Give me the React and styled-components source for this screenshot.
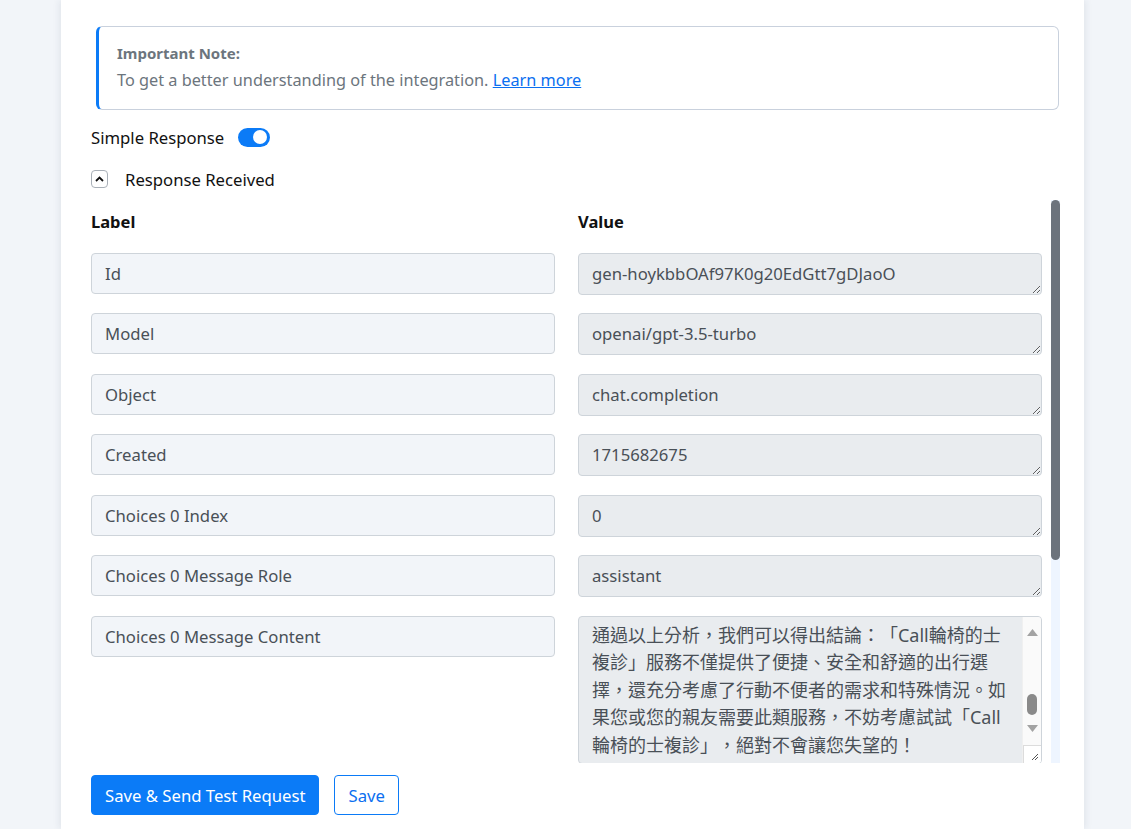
import React from 'react'
import styled, { createGlobalStyle } from 'styled-components'

const GlobalStyle = createGlobalStyle`
  html, body {
    margin: 0;
    padding: 0;
    background: #f2f5f9;
    font-family: "Noto Sans", "Noto Sans CJK TC", sans-serif;
    color: #212529;
  }
  * { box-sizing: border-box; }
`;

const Page = styled.div`
  width: 1131px;
  height: 829px;
  overflow: hidden;
  padding-left: 61px;
`;

const Card = styled.div`
  width: 1023px;
  height: 829px;
  background: #fff;
  box-shadow: -3px 0 6px rgba(30, 50, 80, 0.06), 3px 0 6px rgba(30, 50, 80, 0.06);
  padding: 26px 24px 0 30px;
  display: flex;
  flex-direction: column;
`;

const Note = styled.div`
  margin: 0 1px 0 5px;
  height: 84px;
  border: 1px solid #c9d1dd;
  border-left: 3px solid #0b7bf7;
  border-radius: 6px;
  padding: 13px 18px;
  color: #6c757d;
  font-size: 16.3px;
  line-height: 27px;
`;

const NoteTitle = styled.div`
  font-weight: 700;
  font-size: 15px;
`;

const Link = styled.a`
  color: #0b6ff0;
  text-decoration: underline;
`;

const OptionRow = styled.div`
  display: flex;
  align-items: center;
  gap: ${p => p.$gap || 14}px;
  height: 42px;
  font-size: 16.7px;
  color: #111;
  margin-top: ${p => p.$top || 0}px;
`;

const Toggle = styled.div`
  width: 32px;
  height: 19px;
  border-radius: 10px;
  background: #0b7bf7;
  display: flex;
  align-items: center;
  justify-content: flex-end;
  padding-right: 3px;
`;

const Knob = styled.div`
  width: 14px;
  height: 14px;
  border-radius: 50%;
  background: #fff;
`;

const Chevron = styled.div`
  width: 17px;
  height: 18px;
  border: 1px solid #a9b0b8;
  border-radius: 4px;
  display: flex;
  align-items: center;
  justify-content: center;
`;

const Scroller = styled.div`
  height: 563px;
  display: flex;
  gap: 9px;
`;

const Viewport = styled.div`
  flex: 1;
  overflow: hidden;
  padding-top: 10px;
`;

const Rail = styled.div`
  width: 9px;
  background: #eef5ff;
`;

const RailThumb = styled.div`
  height: 360px;
  border-radius: 5px;
  background: #6c737c;
`;

const Grid = styled.div`
  display: grid;
  grid-template-columns: 1fr 1fr;
  column-gap: 23px;
  row-gap: 18.5px;
  align-items: start;
`;

const Head = styled.div`
  font-weight: 700;
  font-size: 16.5px;
  line-height: 24px;
  color: #111;
`;

const LabelInput = styled.input`
  width: 100%;
  height: 41px;
  border: 1px solid #ced4da;
  border-radius: 4px;
  background: #f2f5f9;
  padding: 0 13px;
  font-family: inherit;
  font-size: 16.7px;
  color: #495057;
  outline: none;
`;

const ValueArea = styled.textarea`
  display: block;
  width: 100%;
  height: 42px;
  border: 1px solid #ced4da;
  border-radius: 4px;
  background: #e9ecef;
  padding: 7px 13px;
  font-family: inherit;
  font-size: 16.7px;
  line-height: 26px;
  color: #495057;
  resize: vertical;
  overflow: hidden;
  outline: none;
`;

const LongValue = styled.div`
  display: flex;
  height: 148px;
  border: 1px solid #ced4da;
  border-radius: 4px;
  background: #e9ecef;
  overflow: hidden;
`;

const LongText = styled.div`
  flex: 1;
  padding: 5px 4px 0 13px;
  font-size: 16.7px;
  line-height: 27.5px;
  color: #495057;
  white-space: nowrap;
  overflow: hidden;
  text-spacing-trim: space-all;
`;

const Cjk = styled.span`
  font-size: 18px;
`;

const SideBar = styled.div`
  width: 19px;
  display: flex;
  flex-direction: column;
  background: #fafafa;
  border-left: 1px solid #f0f0f0;
`;

const Arrow = styled.div`
  height: 17px;
  margin-top: ${p => p.$top || 0}px;
  margin-bottom: ${p => p.$bottom || 0}px;
  display: flex;
  align-items: center;
  justify-content: center;
`;

const Track = styled.div`
  flex: 1;
  display: flex;
  flex-direction: column;
  justify-content: flex-end;
  align-items: center;
  padding-bottom: 5px;
`;

const Thumb = styled.div`
  width: 10px;
  height: 21px;
  border-radius: 5px;
  background: #8a8a8a;
`;

const Corner = styled.div`
  height: 18px;
  border-top: 1px solid #dcdcdc;
  border-left: 1px solid #dcdcdc;
  background: #fff;
  display: flex;
  align-items: flex-end;
  justify-content: flex-end;
  padding: 0 2px 2px 0;
`;

const Buttons = styled.div`
  display: flex;
  gap: 15px;
  margin-top: 12px;
`;

const Button = styled.button`
  height: 40px;
  padding: 0 13px;
  border-radius: 4px;
  font-family: inherit;
  font-size: 16.7px;
  border: 1px solid #0b7bf7;
  background: ${p => (p.$primary ? '#0b7bf7' : '#fff')};
  color: ${p => (p.$primary ? '#fff' : '#0b6ff0')};
`;

const rows = [
  ['Id', 'gen-hoykbbOAf97K0g20EdGtt7gDJaoO'],
  ['Model', 'openai/gpt-3.5-turbo'],
  ['Object', 'chat.completion'],
  ['Created', '1715682675'],
  ['Choices 0 Index', '0'],
  ['Choices 0 Message Role', 'assistant'],
]

const extra = [
  ['Choices 0 Finish Reason', 'stop'],
  ['Usage Prompt Tokens', '512'],
  ['Usage Completion Tokens', '236'],
  ['Usage Total Tokens', '748'],
]

const content = [
  '通過以上分析，我們可以得出結論：「Call輪椅的士',
  '複診」服務不僅提供了便捷、安全和舒適的出行選',
  '擇，還充分考慮了行動不便者的需求和特殊情況。如',
  '果您或您的親友需要此類服務，不妨考慮試試「Call',
  '輪椅的士複診」，絕對不會讓您失望的！',
]

function ResizeMark() {
  return (
    <svg width="8" height="8" viewBox="0 0 8 8">
      <path d="M1 7 L7 1 M4 7 L7 4" stroke="#555" strokeWidth="1" fill="none" />
    </svg>
  )
}

function Tri({ down }) {
  return (
    <svg width="11" height="7" viewBox="0 0 11 7">
      <polygon points={down ? '0,0 11,0 5.5,7' : '0,7 11,7 5.5,0'} fill="#a3a3a3" />
    </svg>
  )
}

function Row({ label, value }) {
  return (
    <>
      <LabelInput readOnly value={label} />
      <ValueArea readOnly value={value} />
    </>
  )
}

export default function App() {
  return (
    <Page>
      <GlobalStyle />
      <Card>
        <Note>
          <NoteTitle>Important Note:</NoteTitle>
          <div>
            To get a better understanding of the integration. <Link href="#">Learn more</Link>
          </div>
        </Note>
        <OptionRow $top={6}>
          <span>Simple Response</span>
          <Toggle><Knob /></Toggle>
        </OptionRow>
        <OptionRow $gap={17}>
          <Chevron>
            <svg width="9" height="6" viewBox="0 0 9 6">
              <path d="M1 5 L4.5 1.5 L8 5" stroke="#111" strokeWidth="1.8" fill="none" />
            </svg>
          </Chevron>
          <span>Response Received</span>
        </OptionRow>
        <Scroller>
          <Viewport>
            <Grid>
              <Head>Label</Head>
              <Head>Value</Head>
              {rows.map(([label, value]) => (
                <Row key={label} label={label} value={value} />
              ))}
              <LabelInput readOnly value="Choices 0 Message Content" />
              <LongValue>
                <LongText>
                  {content.map((line, i) => (
                    <div key={i}><Cjk>{line}</Cjk></div>
                  ))}
                </LongText>
                <SideBar>
                  <Arrow $top={7}><Tri /></Arrow>
                  <Track><Thumb /></Track>
                  <Arrow $bottom={8}><Tri down /></Arrow>
                  <Corner><ResizeMark /></Corner>
                </SideBar>
              </LongValue>
              {extra.map(([label, value]) => (
                <Row key={label} label={label} value={value} />
              ))}
            </Grid>
          </Viewport>
          <Rail><RailThumb /></Rail>
        </Scroller>
        <Buttons>
          <Button $primary>Save &amp; Send Test Request</Button>
          <Button>Save</Button>
        </Buttons>
      </Card>
    </Page>
  )
}
